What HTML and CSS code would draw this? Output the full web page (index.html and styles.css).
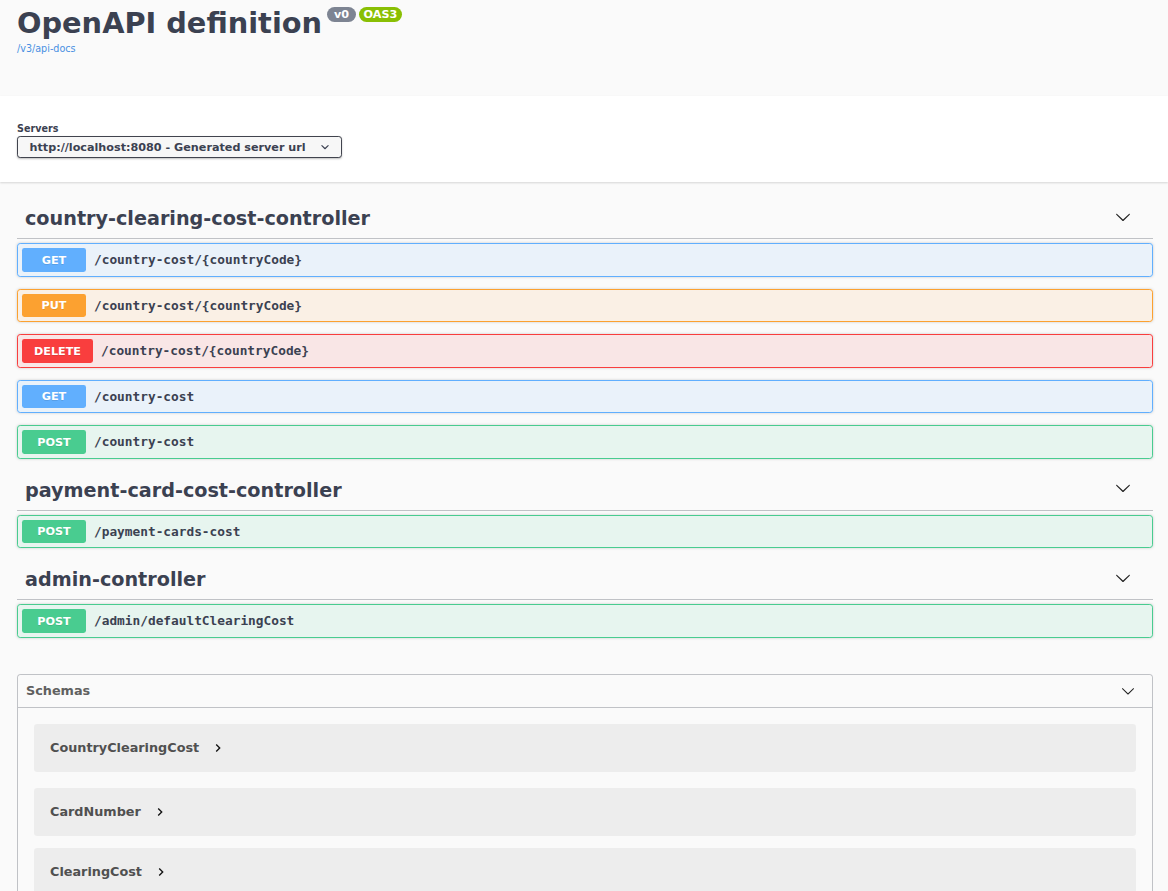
FILE: index.html
```html
<!DOCTYPE html>
<html lang="en">
<head>
<meta charset="utf-8">
<title>Swagger UI</title>
<link rel="stylesheet" href="styles.css">
</head>
<body>
<div class="info">
  <div class="wrapper">
    <div class="title-row">
      <h2 class="title">OpenAPI definition</h2>
      <span class="badge badge-version">v0</span>
      <span class="badge badge-oas">OAS3</span>
    </div>
    <a class="link" href="#">/v3/api-docs</a>
  </div>
</div>

<div class="scheme-container">
  <div class="wrapper">
    <span class="servers-title">Servers</span>
    <div class="select">
      <span class="select-text">http://localhost:8080 - Generated server url</span>
      <svg class="select-arrow" viewBox="0 0 20 20"><path d="M13.418 7.859a.695.695 0 0 1 .978 0 .68.68 0 0 1 0 .969l-3.908 3.83a.697.697 0 0 1-.979 0l-3.908-3.83a.68.68 0 0 1 0-.969.695.695 0 0 1 .978 0L10 11l3.418-3.141z"/></svg>
    </div>
  </div>
</div>

<div class="wrapper main">
  <section class="tag-section">
    <h3 class="tag"><span>country-clearing-cost-controller</span><svg class="tag-arrow" viewBox="0 0 20 20"><path d="M17.418 6.109c.272-.268.709-.268.979 0s.271.701 0 .969l-7.908 7.83c-.27.268-.707.268-.979 0l-7.908-7.83c-.27-.268-.27-.701 0-.969.271-.268.709-.268.979 0L10 13.25l7.418-7.141z"/></svg></h3>
    <div class="opblock op-get"><span class="method">GET</span><span class="path">/country-cost/{countryCode}</span></div>
    <div class="opblock op-put"><span class="method">PUT</span><span class="path">/country-cost/{countryCode}</span></div>
    <div class="opblock op-delete"><span class="method">DELETE</span><span class="path">/country-cost/{countryCode}</span></div>
    <div class="opblock op-get"><span class="method">GET</span><span class="path">/country-cost</span></div>
    <div class="opblock op-post"><span class="method">POST</span><span class="path">/country-cost</span></div>
  </section>

  <section class="tag-section">
    <h3 class="tag"><span>payment-card-cost-controller</span><svg class="tag-arrow" viewBox="0 0 20 20"><path d="M17.418 6.109c.272-.268.709-.268.979 0s.271.701 0 .969l-7.908 7.83c-.27.268-.707.268-.979 0l-7.908-7.83c-.27-.268-.27-.701 0-.969.271-.268.709-.268.979 0L10 13.25l7.418-7.141z"/></svg></h3>
    <div class="opblock op-post"><span class="method">POST</span><span class="path">/payment-cards-cost</span></div>
  </section>

  <section class="tag-section">
    <h3 class="tag"><span>admin-controller</span><svg class="tag-arrow" viewBox="0 0 20 20"><path d="M17.418 6.109c.272-.268.709-.268.979 0s.271.701 0 .969l-7.908 7.83c-.27.268-.707.268-.979 0l-7.908-7.83c-.27-.268-.27-.701 0-.969.271-.268.709-.268.979 0L10 13.25l7.418-7.141z"/></svg></h3>
    <div class="opblock op-post"><span class="method">POST</span><span class="path">/admin/defaultClearingCost</span></div>
  </section>

  <section class="models">
    <h4 class="models-head"><span>Schemas</span><svg class="models-arrow" viewBox="0 0 20 20"><path d="M17.418 6.109c.272-.268.709-.268.979 0s.271.701 0 .969l-7.908 7.83c-.27.268-.707.268-.979 0l-7.908-7.83c-.27-.268-.27-.701 0-.969.271-.268.709-.268.979 0L10 13.25l7.418-7.141z"/></svg></h4>
    <div class="model-container first"><span class="model-title">CountryClearingCost</span><svg class="model-toggle" viewBox="0 0 24 24"><path d="M10 6L8.59 7.41 13.17 12l-4.58 4.59L10 18l6-6z"/></svg></div>
    <div class="model-container"><span class="model-title">CardNumber</span><svg class="model-toggle" viewBox="0 0 24 24"><path d="M10 6L8.59 7.41 13.17 12l-4.58 4.59L10 18l6-6z"/></svg></div>
    <div class="model-container"><span class="model-title">ClearingCost</span><svg class="model-toggle" viewBox="0 0 24 24"><path d="M10 6L8.59 7.41 13.17 12l-4.58 4.59L10 18l6-6z"/></svg></div>
  </section>
</div>
</body>
</html>
```
FILE: styles.css
```css
html {
  overflow: hidden;
}

body {
  margin: 0;
  background: #fafafa;
  font-family: "DejaVu Sans", sans-serif;
  color: #3b4151;
}

.wrapper {
  padding: 0 15px 0 17px;
}

/* Info header */
.info {
  height: 96px;
  box-sizing: border-box;
  padding-top: 6px;
}

.title-row {
  display: flex;
  align-items: flex-start;
}

.title {
  margin: 0 5px 0 0;
  font-size: 28.8px;
  font-weight: bold;
  line-height: normal;
  color: #3b4151;
}

.badge {
  margin-top: 0.7px;
  margin-right: 3px;
  padding: 1.3px 5.5px;
  border-radius: 57px;
  font-size: 11.2px;
  font-weight: bold;
  line-height: 13px;
  color: #fff;
  text-align: center;
}

.badge-version {
  background: #7d8492;
  min-width: 29px;
  box-sizing: border-box;
}

.badge-oas {
  background: #89bf04;
  padding: 1.3px 4.5px;
}

.link {
  display: block;
  margin-top: 2.5px;
  font-size: 9.6px;
  line-height: normal;
  color: #4990e2;
  text-decoration: none;
}

/* Servers */
.scheme-container {
  background: #fff;
  box-shadow: 0 1px 2px 0 rgba(0, 0, 0, 0.15);
  padding: 24px 0;
  margin-bottom: 17px;
}

.servers-title {
  display: block;
  padding-top: 2px;
  font-size: 9.6px;
  font-weight: bold;
  line-height: 14px;
  color: #3b4151;
}

.select {
  display: flex;
  align-items: center;
  width: 325px;
  box-sizing: border-box;
  border: 1px solid #41444e;
  border-radius: 3.2px;
  background: #f7f7f7;
  box-shadow: 0 1px 2px 0 rgba(0, 0, 0, 0.25);
  padding: 3.6px 8px 3.6px 11.5px;
  font-size: 11.2px;
  font-weight: bold;
  line-height: 13px;
  color: #3b4151;
}

.select-arrow {
  display: block;
  width: 16px;
  height: 16px;
  margin: -1.5px 0 -1.5px auto;
  fill: #3b4151;
}

/* Tags */
.tag-section {
  display: flex;
  flex-direction: column;
}

.tag {
  display: flex;
  align-items: center;
  justify-content: space-between;
  margin: 0 0 4px;
  padding: 8px 16px 8px 8px;
  border-bottom: 1px solid rgba(59, 65, 81, 0.3);
  font-size: 19.2px;
  font-weight: bold;
  line-height: 23px;
  color: #3b4151;
}

.tag-arrow {
  display: block;
  width: 16px;
  height: 16px;
  margin: 0 6px 4px 0;
  fill: #222;
}

/* Operations */
.opblock {
  display: flex;
  align-items: center;
  padding: 4px;
  margin-bottom: 12px;
  border: 1px solid #000;
  border-radius: 3.2px;
  box-shadow: 0 0 3px rgba(0, 0, 0, 0.19);
}

.method {
  box-sizing: border-box;
  min-width: 64px;
  padding: 5.6px 12px 4.4px;
  border-radius: 2.4px;
  font-size: 11.2px;
  font-weight: bold;
  line-height: 13.5px;
  color: #fff;
  text-align: center;
  text-shadow: 0 1px 0 rgba(0, 0, 0, 0.1);
}

.path {
  padding: 0 8px;
  font-family: "DejaVu Sans Mono", monospace;
  font-size: 12.8px;
  font-weight: bold;
  color: #3b4151;
}

.op-get {
  background: rgba(97, 175, 254, 0.1);
  border-color: #61affe;
}
.op-get .method {
  background: #61affe;
}

.op-put {
  background: rgba(252, 161, 48, 0.1);
  border-color: #fca130;
}
.op-put .method {
  background: #fca130;
}

.op-delete {
  background: rgba(249, 62, 62, 0.1);
  border-color: #f93e3e;
}
.op-delete .method {
  background: #f93e3e;
}

.op-post {
  background: rgba(73, 204, 144, 0.1);
  border-color: #49cc90;
}
.op-post .method {
  background: #49cc90;
}

/* Schemas */
.models {
  margin-top: 24px;
  border: 1px solid rgba(59, 65, 81, 0.3);
  border-radius: 3.2px;
  padding-bottom: 16px;
}

.models-head {
  display: flex;
  align-items: center;
  justify-content: space-between;
  margin: 0 0 4px;
  padding: 8px 17.5px 8px 8px;
  border-bottom: 1px solid rgba(59, 65, 81, 0.3);
  font-size: 12.8px;
  font-weight: bold;
  line-height: normal;
  color: #606060;
}

.models-arrow {
  display: block;
  width: 14px;
  height: 14px;
  margin: 1px 0;
  fill: #222;
}

.model-container {
  display: flex;
  align-items: center;
  height: 48px;
  margin: 0 16px 12px;
  padding-left: 16px;
  border-radius: 3.2px;
  background: rgba(0, 0, 0, 0.05);
}

.model-container.first {
  margin: 16px;
}

.model-title {
  font-size: 12.8px;
  font-weight: bold;
  line-height: normal;
  color: #505050;
}

.model-toggle {
  display: block;
  width: 16px;
  height: 16px;
  margin-left: 11px;
  fill: #111;
}
```
